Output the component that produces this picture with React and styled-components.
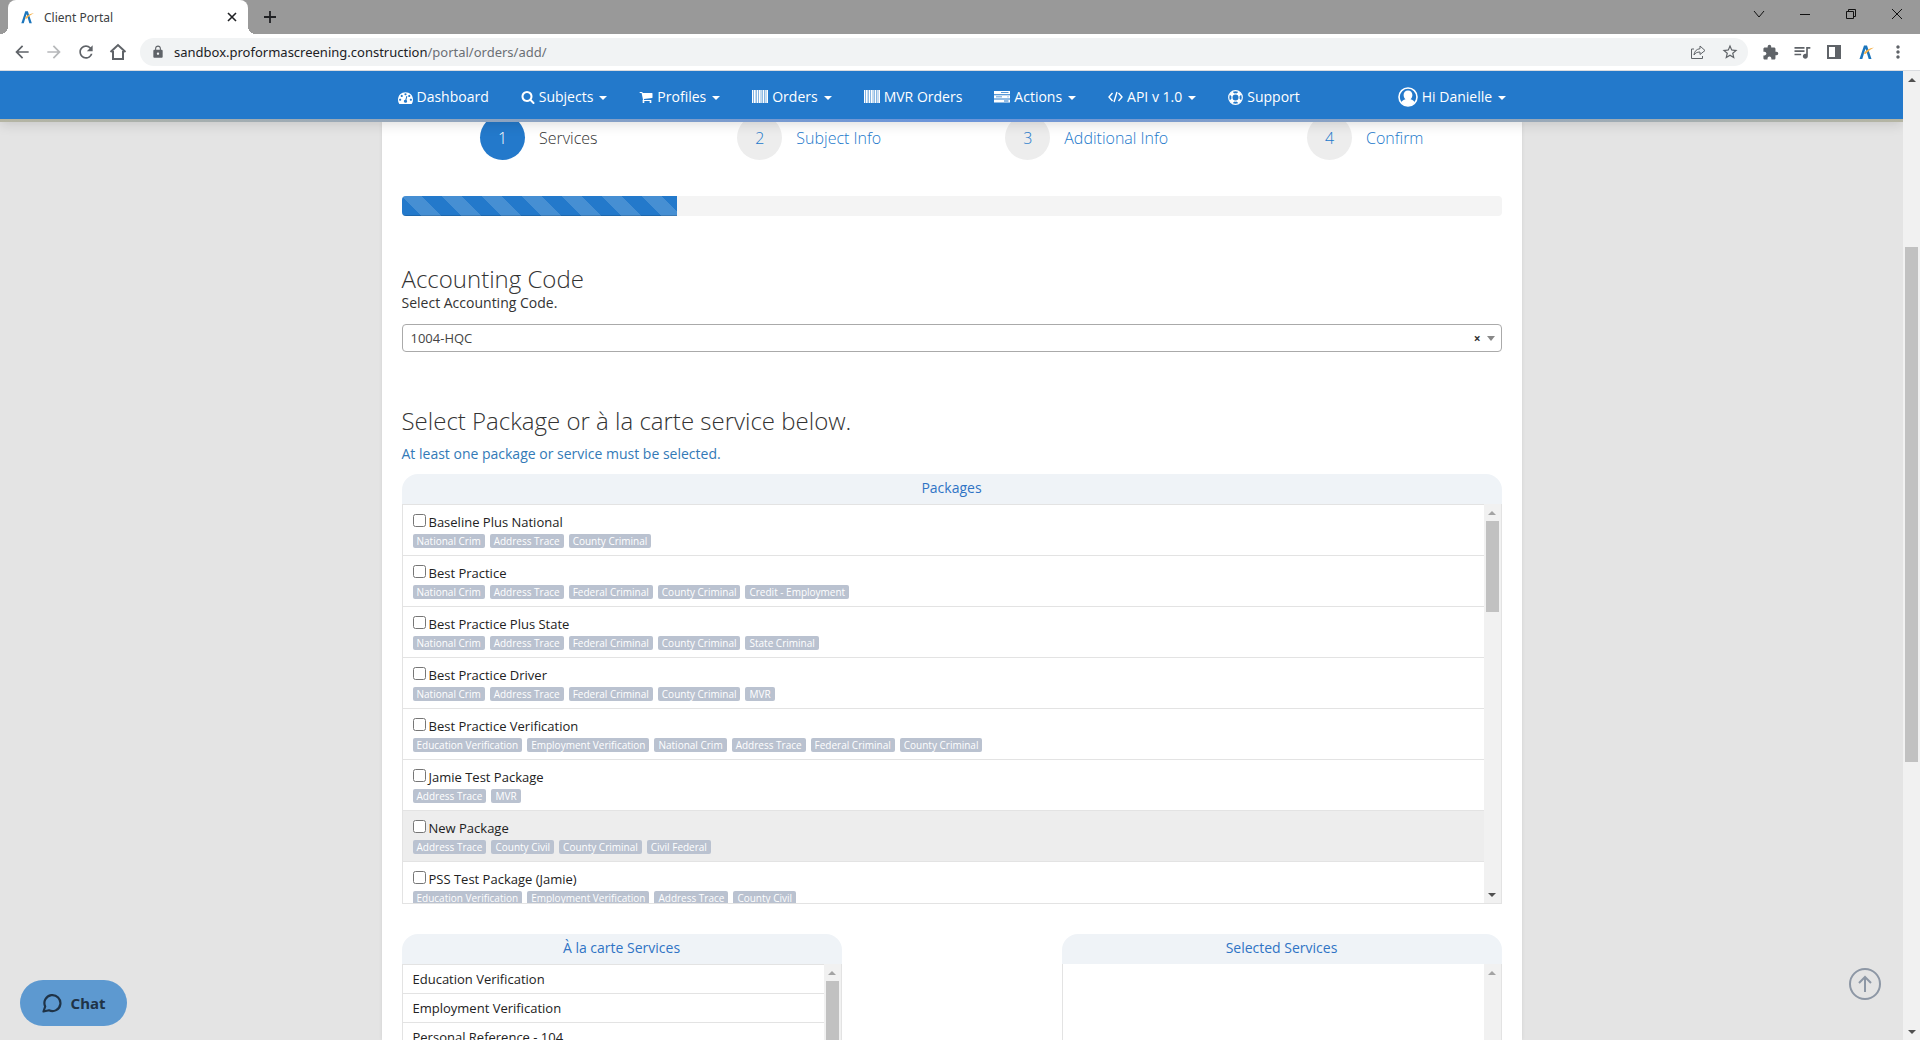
import React from 'react';
import styled, { createGlobalStyle, css } from 'styled-components';
import { MdExtension, MdQueueMusic, MdLock, MdStarBorder, MdMoreVert, MdArrowBack, MdArrowForward, MdRefresh } from 'react-icons/md';

const GlobalStyle = createGlobalStyle`
  * { box-sizing: border-box; }
  html, body, #root { height: 100%; }
  body {
    margin: 0;
    overflow: hidden;
    font-family: "Open Sans", "Noto Sans", sans-serif;
    font-size: 14px;
    color: #333;
    background: #e4e4e4;
  }
  h2, p, ul { margin: 0; padding: 0; font-weight: inherit; }
  button { border: 0; padding: 0; background: none; font: inherit; color: inherit; }
  a { color: inherit; text-decoration: none; }
  svg { display: block; }
`;

/* ---------- browser window ---------- */

const Window = styled.div`
  height: 100vh;
  display: flex;
  flex-direction: column;
`;

const TabStrip = styled.div`
  flex: none;
  height: 34px;
  display: flex;
  padding-left: 8px;
  background: #999;
`;

const Tab = styled.div`
  position: relative;
  width: 240px;
  display: flex;
  align-items: center;
  gap: 10px;
  padding: 0 9px 0 12px;
  background: #fff;
  border-radius: 8px 8px 0 0;
  font: 12px "Noto Sans", sans-serif;
  color: #3c4043;

  &::before, &::after {
    content: "";
    position: absolute;
    bottom: 0;
    width: 8px;
    height: 8px;
  }
  &::before { left: -8px; background: radial-gradient(circle at 0 0, #999 8px, #fff 8px); }
  &::after { right: -8px; background: radial-gradient(circle at 100% 0, #999 8px, #fff 8px); }
`;

const TabTitle = styled.span`
  flex: 1;
`;

const TabButton = styled.button`
  display: grid;
  place-items: center;
  width: 14px;
  color: #202124;
`;

const NewTab = styled.button`
  display: grid;
  place-items: center;
  width: 28px;
  margin-left: 8px;
  color: #202124;
`;

const WindowButtons = styled.div`
  display: flex;
  margin-left: auto;
  height: 28px;
`;

const WindowButton = styled.button`
  width: 46px;
  display: grid;
  place-items: center;
  color: #111;
`;

const Toolbar = styled.div`
  flex: none;
  height: 37px;
  display: flex;
  align-items: center;
  padding: 0 6px;
  background: #fff;
  border-bottom: 1px solid #dadce0;
  color: #5f6368;
`;

const ToolButton = styled.button`
  width: 32px;
  height: 28px;
  display: grid;
  place-items: center;
  opacity: ${(p) => (p.disabled ? 0.45 : 1)};
`;

const Omnibox = styled.div`
  flex: 1;
  height: 28px;
  display: flex;
  align-items: center;
  margin: 0 6px;
  padding: 0 2px 0 11px;
  border-radius: 14px;
  background: #f1f3f4;
`;

const Address = styled.div`
  flex: 1;
  padding-left: 9px;
  font: 13px/20px "Noto Sans", sans-serif;
  color: #6b6f74;
`;

const Host = styled.span`
  color: #202124;
`;

/* ---------- page ---------- */

const Viewport = styled.div`
  flex: 1;
  min-height: 0;
  display: flex;
`;

const Page = styled.div`
  flex: 1;
  min-width: 0;
  display: flex;
  flex-direction: column;
  overflow: hidden;
  background: #e4e4e4;
`;

const NavBar = styled.nav`
  flex: none;
  position: relative;
  z-index: 1;
  background: #2379cb;
  color: #fff;
  box-shadow: 0 2px 12px rgba(0, 0, 0, 0.14);

  &::after {
    content: "";
    display: block;
    height: 3px;
    background: linear-gradient(90deg, #b5b5a3, #6a94da 50%, #b5b5a3);
  }
`;

const NavInner = styled.div`
  width: 1140px;
  max-width: 100%;
  height: 48px;
  margin: 0 auto;
  display: flex;
  align-items: center;
  padding: 4px 0 0 16px;
`;

const NavLink = styled.a`
  display: flex;
  align-items: center;
  gap: 4px;
  margin-right: ${(p) => (p.$wide ? 98 : 32)}px;
  font-size: 14px;
  line-height: 20px;
  font-weight: 500;
  white-space: nowrap;
`;

const Caret = styled.span`
  width: 0;
  height: 0;
  margin: 2px 0 0 2px;
  border: 4px solid transparent;
  border-top-color: currentColor;
  border-bottom: 0;
`;

const Card = styled.main`
  flex: 1;
  min-height: 0;
  width: 1140px;
  max-width: 100%;
  margin: 0 auto;
  padding: 0 20px;
  overflow: hidden;
  background: #fff;
  box-shadow: 0 0 4px rgba(0, 0, 0, 0.08);
`;

const Steps = styled.ol`
  list-style: none;
  margin: -7px 0 0;
  padding: 0 0 0 2px;
  display: grid;
  grid-template-columns: 271fr 271fr 285fr 273fr;
`;

const Step = styled.li`
  display: flex;
  justify-content: center;
`;

const StepLink = styled.a`
  display: flex;
  align-items: center;
  gap: 14px;
  font-size: 16px;
  line-height: 22px;
  font-weight: 300;
  color: ${(p) => (p.$active ? '#333' : '#2379cb')};
`;

const StepNumber = styled.span`
  width: 45px;
  height: 45px;
  border-radius: 50%;
  display: grid;
  place-items: center;
  background: ${(p) => (p.$active ? '#2379cb' : '#ededed')};
  color: ${(p) => (p.$active ? '#fff' : '#2379cb')};
`;

const Progress = styled.div`
  height: 20px;
  margin-top: 36px;
  border-radius: 4px;
  overflow: hidden;
  background: #f4f4f4;
`;

const ProgressFill = styled.div`
  height: 100%;
  background: linear-gradient(45deg, rgba(255, 255, 255, 0.16) 25%, transparent 25%, transparent 50%,
    rgba(255, 255, 255, 0.16) 50%, rgba(255, 255, 255, 0.16) 75%, transparent 75%) 0 0 / 40px 40px #2379cb;
  box-shadow: inset 0 -1px 0 rgba(0, 0, 0, 0.15);
`;

const Heading = styled.h2`
  font-size: 24px;
  line-height: 26px;
  font-weight: 300;
  color: #333;
`;

const Section = styled.section`
  margin-top: ${(p) => p.$top}px;
`;

const FieldLabel = styled.label`
  display: block;
  font-size: 14px;
  line-height: 22px;
`;

const SelectBox = styled.div`
  position: relative;
  margin-top: 10px;
`;

const Select = styled.select`
  appearance: none;
  display: block;
  width: 100%;
  height: 28px;
  padding: 0 8px;
  border: 1px solid #aaa;
  border-radius: 4px;
  background: #fff;
  font: 13px "Open Sans", sans-serif;
  color: #444;
`;

const SelectTools = styled.div`
  position: absolute;
  inset: 0 7px 0 auto;
  display: flex;
  align-items: center;
  gap: 6px;
  pointer-events: none;
`;

const ClearButton = styled.button`
  pointer-events: auto;
  font-size: 12px;
  font-weight: 700;
  color: #333;
`;

const SelectArrow = styled.span`
  border: 4px solid transparent;
  border-top: 5px solid #888;
  border-bottom: 0;
`;

const Notice = styled.p`
  margin-top: 10px;
  line-height: 20px;
  color: #337ab7;
`;

const Panel = styled.section`
  ${(p) => p.$share && css`width: ${p.$share};`}
`;

const PanelTitle = styled.h2`
  height: 30px;
  border-radius: 16px 16px 0 0;
  background: #eff3f7;
  text-align: center;
  font-size: 14px;
  line-height: 28px;
  color: #2f74c5;
`;

const PanelBody = styled.div`
  display: flex;
  height: ${(p) => p.$height}px;
  border: 1px solid #e3e3e3;
  border-top: 0;
`;

const List = styled.ul`
  flex: 1;
  overflow: hidden;
  list-style: none;
`;

const PackageRow = styled.li`
  height: 51px;
  padding: 7px 10px 0;
  border-top: 1px solid #e3e3e3;
  background: ${(p) => (p.$hover ? '#ededed' : '#fff')};
`;

const PackageName = styled.label`
  display: flex;
  align-items: center;
  gap: 3px;
  font-size: 13px;
  line-height: 20px;
  color: #222;
`;

const Check = styled.input`
  width: 13px;
  height: 13px;
  margin: 0 0 4px;
`;

const Tags = styled.div`
  display: flex;
  gap: 5px;
  margin-top: 2px;
`;

const Tag = styled.span`
  height: 14px;
  padding: 0 4px;
  border-radius: 2px;
  background: #bac2d0;
  font-size: 10px;
  line-height: 14px;
  color: #fff;
  white-space: nowrap;
`;

const ServiceRow = styled.li`
  padding: 0 10px;
  border-top: 1px solid #e3e3e3;
  font-size: 13px;
  line-height: 28px;
  color: #222;
`;

const ServiceColumns = styled.div`
  display: flex;
  justify-content: space-between;
  margin-top: 30px;
`;

const Track = styled.div`
  flex: none;
  width: 17px;
  display: flex;
  flex-direction: column;
  align-items: center;
  background: #f1f1f1;
`;

const TrackButton = styled.span`
  flex: none;
  width: 17px;
  height: 17px;
  display: grid;
  place-items: center;
  color: ${(p) => (p.$dim ? '#a3a3a3' : '#505050')};
`;

const Thumb = styled.div`
  width: 13px;
  height: ${(p) => p.$length}px;
  margin-top: ${(p) => p.$offset || 0}px;
  background: #c1c1c1;
`;

const TrackSpace = styled.div`
  flex: 1;
`;

const ChatButton = styled.button`
  position: fixed;
  left: 20px;
  bottom: 14px;
  z-index: 2;
  width: 107px;
  height: 46px;
  display: flex;
  align-items: center;
  justify-content: center;
  gap: 9px;
  border-radius: 23px;
  background: #5d99d0;
  color: #1f3347;
  font: 700 15px "Noto Sans", sans-serif;
`;

const TopButton = styled.button`
  position: fixed;
  right: 38px;
  bottom: 39px;
  z-index: 2;
  color: #8d97a5;
`;

/* ---------- icons ---------- */

const Fa = ({ d, size = 14 }) => (
  <svg width={size} height={size} viewBox="0 0 1792 1792" fill="currentColor" aria-hidden="true">
    <path d={d} />
  </svg>
);

const DASH = 'M384 1152q0-53-37.5-90.5t-90.5-37.5-90.5 37.5-37.5 90.5 37.5 90.5 90.5 37.5 90.5-37.5 37.5-90.5zm192-448q0-53-37.5-90.5t-90.5-37.5-90.5 37.5-37.5 90.5 37.5 90.5 90.5 37.5 90.5-37.5 37.5-90.5zm428 481l101-382q6-26-7.5-48.5t-38.5-29.5-48 6.5-30 39.5l-101 382q-60 5-107 43.5t-63 98.5q-20 77 20 146t117 89 146-20 89-117q16-60-6-117t-72-91zm660-33q0-53-37.5-90.5t-90.5-37.5-90.5 37.5-37.5 90.5 37.5 90.5 90.5 37.5 90.5-37.5 37.5-90.5zm-640-640q0-53-37.5-90.5t-90.5-37.5-90.5 37.5-37.5 90.5 37.5 90.5 90.5 37.5 90.5-37.5 37.5-90.5zm448 192q0-53-37.5-90.5t-90.5-37.5-90.5 37.5-37.5 90.5 37.5 90.5 90.5 37.5 90.5-37.5 37.5-90.5zm320 448q0 261-141 483-19 29-54 29h-1402q-35 0-54-29-141-221-141-483 0-182 71-348t191-286 286-191 348-71 348 71 286 191 191 286 71 348z';
const SEARCH = 'M1216 832q0-185-131.5-316.5t-316.5-131.5-316.5 131.5-131.5 316.5 131.5 316.5 316.5 131.5 316.5-131.5 131.5-316.5zm512 832q0 52-38 90t-90 38q-54 0-90-38l-343-342q-179 124-399 124-143 0-273.5-55.5t-225-150-150-225-55.5-273.5 55.5-273.5 150-225 225-150 273.5-55.5 273.5 55.5 225 150 150 225 55.5 273.5q0 220-124 399l343 343q37 37 37 90z';
const CART = 'M704 1536q0 52-38 90t-90 38-90-38-38-90 38-90 90-38 90 38 38 90zm896 0q0 52-38 90t-90 38-90-38-38-90 38-90 90-38 90 38 38 90zm128-1088v512q0 24-16.5 42.5t-40.5 21.5l-1044 122q13 60 13 70 0 16-24 64h920q26 0 45 19t19 45-19 45-45 19h-1024q-26 0-45-19t-19-45q0-11 8-31.5t16-36 21.5-40 15.5-29.5l-177-823h-204q-26 0-45-19t-19-45 19-45 45-19h256q16 0 28.5 6.5t19.5 15.5 13 24.5 8 26 5.5 29.5 4.5 26h1201q26 0 45 19t19 45z';

const Barcode = () => (
  <svg width="16" height="14" viewBox="0 0 16 14" fill="currentColor" aria-hidden="true">
    <path d="M0 0h16v13H0z" opacity="0.45" />
    <path d="M0 0h1v13H0zM2 0h1v13H2zM3.500 0h.6v13h-.6zM5 0h1v13H5zM7 0h1.500v13H7zM9.500 0h.6v13h-.6zM11 0h1v13h-1zM13 0h.6v13H13zM14.500 0H16v13h-1.500z" />
  </svg>
);

const Server = () => (
  <svg width="16" height="14" viewBox="0 0 16 14" aria-hidden="true">
    <path fill="currentColor" d="M0 1h16v3.200H0zM0 5.200h16v3.200H0zM0 9.400h16v3.200H0z" />
    <path fill="#2379cb" d="M7 2.200h7.500v.9H7zM2 6.400h6v.9H2zM10 10.600h4.500v.9H10zM13.500 6.400h1v.9h-1z" />
  </svg>
);

const Code = () => (
  <svg width="15" height="14" viewBox="0 0 15 14" fill="none" stroke="currentColor" strokeWidth="1.400" aria-hidden="true">
    <path d="M4.500 3L1 7l3.500 4M10.500 3L14 7l-3.500 4M9 2L6 12" />
  </svg>
);

const LifeRing = () => (
  <svg width="15" height="15" viewBox="0 0 15 15" fill="none" stroke="currentColor" aria-hidden="true">
    <circle cx="7.500" cy="7.500" r="6.800" strokeWidth="1.200" />
    <circle cx="7.500" cy="7.500" r="3.600" strokeWidth="1.200" />
    <path d="M2.800 2.800L5 5M12.200 2.800L10 5M2.800 12.200L5 10M12.200 12.200L10 10" strokeWidth="4" />
  </svg>
);

const UserCircle = () => (
  <svg width="20" height="20" viewBox="0 0 20 20" aria-hidden="true">
    <circle cx="10" cy="10" r="9" fill="none" stroke="currentColor" strokeWidth="1.600" />
    <path fill="currentColor" d="M10 3.600c2.700 0 4.400 1.900 4.400 4.400 0 1.800-.8 3.500-1.900 4.300 2.300.4 3.500 1.600 4 3.300A9 9 0 0 1 10 19a9 9 0 0 1-6.500-3.400c.5-1.700 1.700-2.900 4-3.300C6.400 11.500 5.600 9.800 5.600 8c0-2.500 1.700-4.400 4.400-4.400z" />
  </svg>
);

const Logo = ({ size = 14 }) => (
  <svg width={size} height={size} viewBox="0 0 16 16" aria-hidden="true">
    <path d="M1.500 15L6 1.500h3L13.500 15h-2.800L7.500 4.600 4.300 15z" fill="#1b75bc" />
    <path d="M5.500 9.500Q9 4.500 16 3.500 11 6 7.500 10z" fill="#f6b24a" />
  </svg>
);

const Stroke = ({ d, size = 12, width = 1, join }) => (
  <svg width={size} height={size} viewBox={`0 0 ${size} ${size}`} fill="none" stroke="currentColor" strokeWidth={width} strokeLinejoin={join} aria-hidden="true">
    <path d={d} />
  </svg>
);

const Arrow = ({ down }) => (
  <svg width="8" height="4" viewBox="0 0 8 4" fill="currentColor" aria-hidden="true">
    <path d={down ? 'M0 0h8L4 4z' : 'M0 4h8L4 0z'} />
  </svg>
);

/* ---------- data ---------- */

const NAV = [
  { text: 'Dashboard', icon: <Fa d={DASH} size={15} /> },
  { text: 'Subjects', icon: <Fa d={SEARCH} />, menu: true },
  { text: 'Profiles', icon: <Fa d={CART} />, menu: true },
  { text: 'Orders', icon: <Barcode />, menu: true },
  { text: 'MVR Orders', icon: <Barcode /> },
  { text: 'Actions', icon: <Server />, menu: true },
  { text: 'API v 1.0', icon: <Code />, menu: true },
  { text: 'Support', icon: <LifeRing />, wide: true },
  { text: 'Hi Danielle', icon: <UserCircle />, menu: true },
];

const STEPS = ['Services', 'Subject Info', 'Additional Info', 'Confirm'];

const PACKAGES = [
  ['Baseline Plus National', 'National Crim', 'Address Trace', 'County Criminal'],
  ['Best Practice', 'National Crim', 'Address Trace', 'Federal Criminal', 'County Criminal', 'Credit - Employment'],
  ['Best Practice Plus State', 'National Crim', 'Address Trace', 'Federal Criminal', 'County Criminal', 'State Criminal'],
  ['Best Practice Driver', 'National Crim', 'Address Trace', 'Federal Criminal', 'County Criminal', 'MVR'],
  ['Best Practice Verification', 'Education Verification', 'Employment Verification', 'National Crim', 'Address Trace', 'Federal Criminal', 'County Criminal'],
  ['Jamie Test Package', 'Address Trace', 'MVR'],
  ['New Package', 'Address Trace', 'County Civil', 'County Criminal', 'Civil Federal'],
  ['PSS Test Package (Jamie)', 'Education Verification', 'Employment Verification', 'Address Trace', 'County Civil'],
];

const SERVICES = ['Education Verification', 'Employment Verification', 'Personal Reference - 104'];

function Scrollbar({ length, offset, dim }) {
  return (
    <Track aria-hidden="true">
      <TrackButton $dim={dim}><Arrow /></TrackButton>
      {length ? <Thumb $length={length} $offset={offset} /> : null}
      <TrackSpace />
      <TrackButton $dim={!length}><Arrow down /></TrackButton>
    </Track>
  );
}

function BrowserChrome() {
  return (
    <>
      <TabStrip>
        <Tab>
          <Logo />
          <TabTitle>Client Portal</TabTitle>
          <TabButton aria-label="Close tab"><Stroke d="M2 2l8 8M10 2l-8 8" width={1.6} /></TabButton>
        </Tab>
        <NewTab aria-label="New tab"><Stroke d="M6 0v12M0 6h12" width={1.8} /></NewTab>
        <WindowButtons>
          <WindowButton aria-label="Search tabs"><Stroke d="M1 3l5 6 5-6" /></WindowButton>
          <WindowButton aria-label="Minimize"><Stroke d="M1 6.500h10" /></WindowButton>
          <WindowButton aria-label="Restore"><Stroke d="M1.500 3.500h7v7h-7zM3.500 3v-1.500h7v7h-2" /></WindowButton>
          <WindowButton aria-label="Close"><Stroke d="M1 1l10 10M11 1L1 11" /></WindowButton>
        </WindowButtons>
      </TabStrip>
      <Toolbar>
        <ToolButton aria-label="Back"><MdArrowBack size={20} /></ToolButton>
        <ToolButton aria-label="Forward" disabled><MdArrowForward size={20} /></ToolButton>
        <ToolButton aria-label="Reload"><MdRefresh size={20} /></ToolButton>
        <ToolButton aria-label="Home"><Stroke size={18} width={2} d="M1.500 9L9 2l7.500 7M4 8v8h10V8" /></ToolButton>
        <Omnibox>
          <MdLock size={14} />
          <Address><Host>sandbox.proformascreening.construction</Host>/portal/orders/add/</Address>
          <ToolButton aria-label="Share">
            <Stroke size={16} width={1} join="round" d="M4 5H1.500v9.500h11V12M10 2l5 4.500-5 4V8C7 8 5 9 4 11c.2-3.500 2.500-6 6-6.300z" />
          </ToolButton>
          <ToolButton aria-label="Bookmark"><MdStarBorder size={18} /></ToolButton>
        </Omnibox>
        <ToolButton aria-label="Extensions"><MdExtension size={17} /></ToolButton>
        <ToolButton aria-label="Media"><MdQueueMusic size={20} /></ToolButton>
        <ToolButton aria-label="Side panel">
          <svg width="14" height="14" viewBox="0 0 14 14" aria-hidden="true"><path fill="currentColor" fillRule="evenodd" d="M0 0h14v14H0zM2 2v10h6V2z" /></svg>
        </ToolButton>
        <ToolButton aria-label="Portal extension"><Logo size={16} /></ToolButton>
        <ToolButton aria-label="Menu"><MdMoreVert size={20} /></ToolButton>
      </Toolbar>
    </>
  );
}

export default function App() {
  return (
    <Window>
      <GlobalStyle />
      <BrowserChrome />
      <Viewport>
        <Page>
          <NavBar>
            <NavInner>
              {NAV.map((n) => (
                <NavLink href="#" key={n.text} $wide={n.wide}>
                  {n.icon}
                  {n.text}
                  {n.menu && <Caret />}
                </NavLink>
              ))}
            </NavInner>
          </NavBar>
          <Card>
            <Steps>
              {STEPS.map((s, i) => (
                <Step key={s}>
                  <StepLink href="#" $active={i === 0}>
                    <StepNumber $active={i === 0}>{i + 1}</StepNumber>
                    {s}
                  </StepLink>
                </Step>
              ))}
            </Steps>
            <Progress role="progressbar" aria-label="Order progress" aria-valuenow={25}>
              <ProgressFill style={{ width: `${100 / STEPS.length}%` }} />
            </Progress>

            <Section $top={50}>
              <Heading>Accounting Code</Heading>
              <FieldLabel htmlFor="accounting-code">Select Accounting Code.</FieldLabel>
              <SelectBox>
                <Select id="accounting-code">
                  <option>1004-HQC</option>
                </Select>
                <SelectTools>
                  <ClearButton aria-label="Clear accounting code">×</ClearButton>
                  <SelectArrow />
                </SelectTools>
              </SelectBox>
            </Section>

            <Section $top={56}>
              <Heading>Select Package or à la carte service below.</Heading>
              <Notice>At least one package or service must be selected.</Notice>
            </Section>

            <Section $top={10}>
              <Panel>
                <PanelTitle>Packages</PanelTitle>
                <PanelBody $height={400}>
                  <List>
                    {PACKAGES.map(([name, ...tags]) => (
                      <PackageRow key={name} $hover={name === 'New Package'}>
                        <PackageName><Check type="checkbox" />{name}</PackageName>
                        <Tags>{tags.map((t) => <Tag key={t}>{t}</Tag>)}</Tags>
                      </PackageRow>
                    ))}
                  </List>
                  <Scrollbar length={91} dim />
                </PanelBody>
              </Panel>
            </Section>

            <ServiceColumns>
              <Panel $share="40%">
                <PanelTitle>À la carte Services</PanelTitle>
                <PanelBody $height={300}>
                  <List>
                    {SERVICES.map((s) => <ServiceRow key={s}>{s}</ServiceRow>)}
                  </List>
                  <Scrollbar length={120} dim />
                </PanelBody>
              </Panel>
              <Panel $share="40%">
                <PanelTitle>Selected Services</PanelTitle>
                <PanelBody $height={300}>
                  <List />
                  <Scrollbar dim />
                </PanelBody>
              </Panel>
            </ServiceColumns>
          </Card>
        </Page>
        <Scrollbar length={515} offset={159} />
      </Viewport>

      <ChatButton>
        <svg width="20" height="20" viewBox="0 0 20 20" fill="none" stroke="currentColor" strokeWidth="2.200" strokeLinejoin="round" aria-hidden="true">
          <path d="M3.200 13.500A8 8 0 1 1 7 17.300L1.500 18.500z" />
        </svg>
        Chat
      </ChatButton>
      <TopButton aria-label="Back to top">
        <svg width="34" height="34" viewBox="0 0 34 34" fill="none" stroke="currentColor" strokeWidth="2" aria-hidden="true">
          <circle cx="17" cy="17" r="15" />
          <path d="M17 25V10M11 16l6-6 6 6" />
        </svg>
      </TopButton>
    </Window>
  );
}
